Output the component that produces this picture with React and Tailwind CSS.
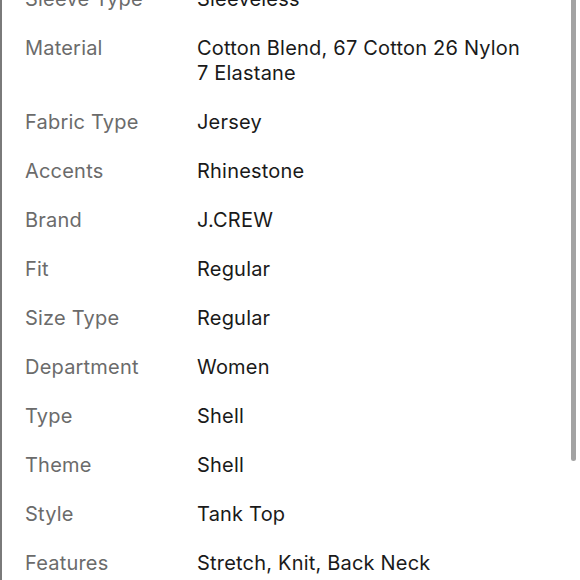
import React from "react";

const rows = [
  ["Sleeve Type", "Sleeveless"],
  ["Material", "Cotton Blend, 67 Cotton 26 Nylon 7 Elastane"],
  ["Fabric Type", "Jersey"],
  ["Accents", "Rhinestone"],
  ["Brand", "J.CREW"],
  ["Fit", "Regular"],
  ["Size Type", "Regular"],
  ["Department", "Women"],
  ["Type", "Shell"],
  ["Theme", "Shell"],
  ["Style", "Tank Top"],
  ["Features", "Stretch, Knit, Back Neck"],
];

export default function App() {
  return (
    <div className="relative w-[580px] h-[580px] overflow-hidden bg-white border-l-2 border-[#7a7a7a]" style={{ fontFamily: "Inter, 'Noto Sans', sans-serif" }}>
      <div className="flex flex-col gap-6 pl-[23px] mt-[-13px]">
        {rows.map(([k, v]) => (
          <div key={k} className="flex text-[20px] leading-[25px] tracking-[0.2px]">
            <div className="w-[172px] shrink-0 text-[#6b6b6b]">{k}</div>
            <div className="w-[328px] text-[#1a1a1a]">{v}</div>
          </div>
        ))}
      </div>
      <div className="absolute right-[4px] top-0 w-[5px] h-[461px] rounded-b-full bg-[#a3a3a3]" />
    </div>
  );
}
